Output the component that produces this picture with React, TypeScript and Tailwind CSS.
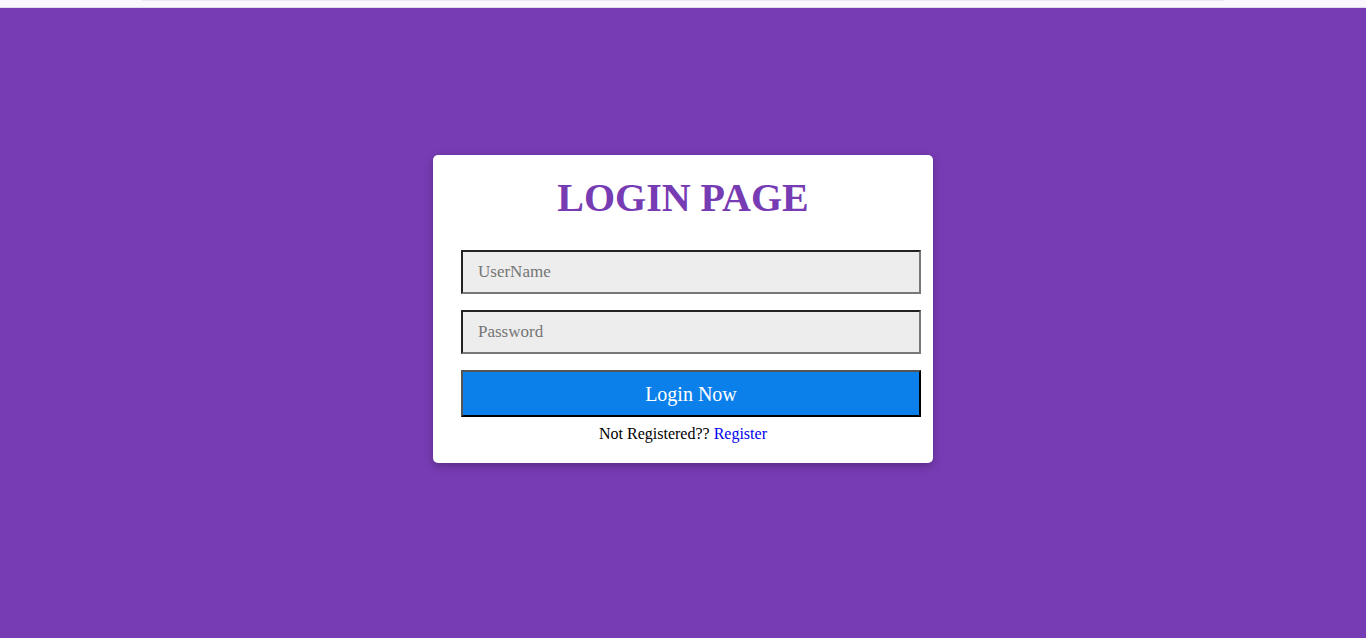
import React from "react";

export default function App() {
  return (
    <div className="w-[1366px] h-[638px] flex flex-col bg-[#773bb3] overflow-hidden" style={{ fontFamily: '"Liberation Serif", "Times New Roman", serif' }}>
      <div className="h-[8px] shrink-0 bg-[#faf7fd] border-b border-[#e3daf0] flex justify-center">
        <div className="w-[1082px] h-[1px] bg-[#ebe6f4]" />
      </div>
      <div className="flex-1 flex justify-center pt-[147px]">
        <div className="w-[500px] h-[308px] bg-white rounded-[5px] shadow-[0_3px_8px_rgba(0,0,0,0.25)] pl-[28px] pt-[21px] flex flex-col">
          <h1 className="w-[444px] text-center text-[40px] leading-[44px] font-bold text-[#773bb3]">LOGIN PAGE</h1>
          <input
            placeholder="UserName"
            className="mt-[30px] w-[460px] h-[44px] bg-[#ededed] border-2 border-t-[#222] border-l-[#222] border-b-[#777] border-r-[#777] pl-[15px] text-[17px] text-black placeholder:text-[#757575] outline-none"
          />
          <input
            placeholder="Password"
            type="password"
            className="mt-[16px] w-[460px] h-[44px] bg-[#ededed] border-2 border-t-[#222] border-l-[#222] border-b-[#777] border-r-[#777] pl-[15px] text-[17px] text-black placeholder:text-[#757575] outline-none"
          />
          <button className="mt-[16px] w-[460px] h-[47px] bg-[#0b7fea] border-2 border-t-[#555] border-l-[#555] border-b-black border-r-black text-white text-[20px]">
            Login Now
          </button>
          <p className="w-[444px] mt-[8px] text-center text-[16px] leading-[18px] text-black">
            Not Registered?? <a className="text-[#0000ee]" href="#">Register</a>
          </p>
        </div>
      </div>
    </div>
  );
}
